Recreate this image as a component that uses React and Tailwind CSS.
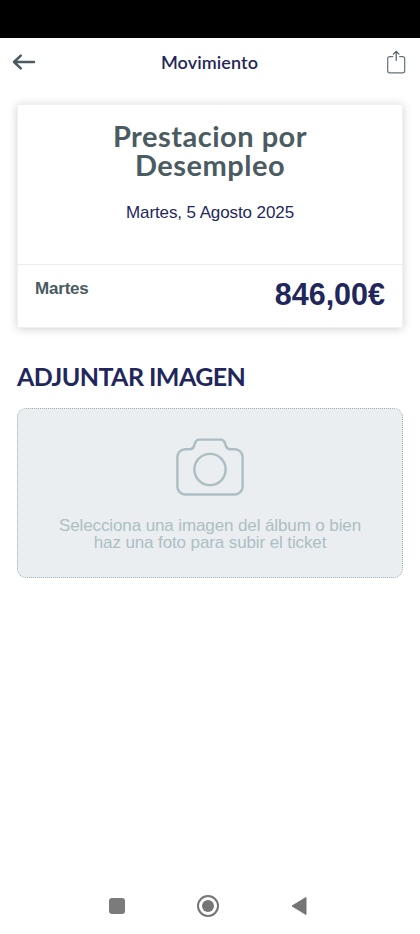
import React from 'react';

const BackIcon = () => (
  <svg width="24" height="18" viewBox="0 0 24 18" fill="none" stroke="#4b5b62" strokeWidth="2.5" strokeLinecap="round" strokeLinejoin="round">
    <path d="M22 9H2M8.8 2.6L2 9l6.8 6.4" />
  </svg>
);

const ShareIcon = () => (
  <svg width="20" height="24" viewBox="0 0 20 24" fill="none" stroke="#66737a" strokeWidth="1.2" strokeLinecap="round" strokeLinejoin="round">
    <path d="M6.8 6.6H3.7a2 2 0 0 0-2 2v12.200a2 2 0 0 0 2 2h13a2 2 0 0 0 2-2V8.600a2 2 0 0 0-2-2h-3.100" />
    <path d="M10.200 10.300V1.400M7.400 4.200l2.800-2.800 2.800 2.800" stroke="#4b5b62" />
  </svg>
);

const CameraIcon = () => (
  <svg width="68" height="58" viewBox="0 0 68 58" fill="none" stroke="#adbec3" strokeWidth="2.4">
    <path d="M9.2 11.2h4.6c2.4 0 3.6-1.100 4.300-3.200l.8-2.700c.8-2.500 1.900-3.700 4.200-3.700h21.800c2.300 0 3.400 1.200 4.200 3.700l.8 2.700c.7 2.100 1.900 3.200 4.300 3.200h4.600a7.800 7.800 0 0 1 7.800 7.800v29.700a7.800 7.800 0 0 1-7.800 7.800H9.200a7.800 7.800 0 0 1-7.800-7.800V19a7.800 7.800 0 0 1 7.800-7.800z" />
    <circle cx="34" cy="31.5" r="15.6" />
  </svg>
);

// Android system navigation
const NavigationBar = () => (
  <div className="mt-auto flex h-14 items-center justify-between pl-[109px] pr-[113px]">
    <div className="h-4 w-4 rounded-[3px] bg-[#7b7b7b]"></div>
    <div className="flex h-[22px] w-[22px] items-center justify-center rounded-full border-2 border-[#757575]">
      <div className="h-3 w-3 rounded-full bg-[#757575]"></div>
    </div>
    <svg width="16" height="20" viewBox="0 0 16 20" fill="#757575" stroke="#757575" strokeLinejoin="round">
      <path d="M1 10L15 1.5v17z" />
    </svg>
  </div>
);

const MovimientoScreen = () => {
  const movimiento = {
    fecha: 'Martes, 5 Agosto 2025',
    dia: 'Martes',
    importe: '846,00€'
  };

  return (
    <div className="flex h-[934px] w-[420px] flex-col bg-white font-['Liberation_Sans',sans-serif] text-[#1f275c]">
      {/* Status bar */}
      <div className="h-[38px] shrink-0 bg-black"></div>

      {/* Header */}
      <header className="flex h-12 items-center justify-between pl-3 pr-3.5">
        <button><BackIcon /></button>
        <h1 className="pt-px pr-[3px] font-['Lato',sans-serif] text-[18px] tracking-[0.1px] font-semibold">Movimiento</h1>
        <button><ShareIcon /></button>
      </header>

      <main className="px-[17px] pt-[18px]">
        {/* Movement card */}
        <section className="h-[224px] border border-[#eef0f2] shadow-[0_1px_9px_rgba(0,0,0,0.18)]">
          <div className="h-[159px] pt-4 text-center">
            <h2 className="font-['Lato',sans-serif] text-[29px] leading-[29px] tracking-[0.5px] font-bold text-[#4b5b62]">
              Prestacion por<br />Desempleo
            </h2>
            <p className="mt-[24px] text-[17px] leading-5 tracking-[-0.1px]">{movimiento.fecha}</p>
          </div>
          <div className="flex items-start justify-between border-t border-[#e9edf0] px-[17px] pt-[13px] font-bold">
            <span className="pt-px text-[17px] leading-5 tracking-[-0.2px] text-[#4b5b62]">{movimiento.dia}</span>
            <span className="text-[30.5px] leading-8">{movimiento.importe}</span>
          </div>
        </section>

        {/* Image upload */}
        <h3 className="mt-[32px] font-['Lato',sans-serif] text-[25px] leading-8 tracking-[-0.55px] font-bold">ADJUNTAR IMAGEN</h3>
        <button className="mt-4 flex h-[170px] w-full flex-col items-center rounded-[9px] border border-dotted border-[#9fb1b7] bg-[#eaeef1] pt-[29px]">
          <CameraIcon />
          <p className="mt-[21px] text-[17px] leading-[17px] tracking-[-0.11px] text-[#adbec3]">
            Selecciona una imagen del álbum o bien<br />haz una foto para subir el ticket
          </p>
        </button>
      </main>

      <NavigationBar />
    </div>
  );
};

export default MovimientoScreen;
